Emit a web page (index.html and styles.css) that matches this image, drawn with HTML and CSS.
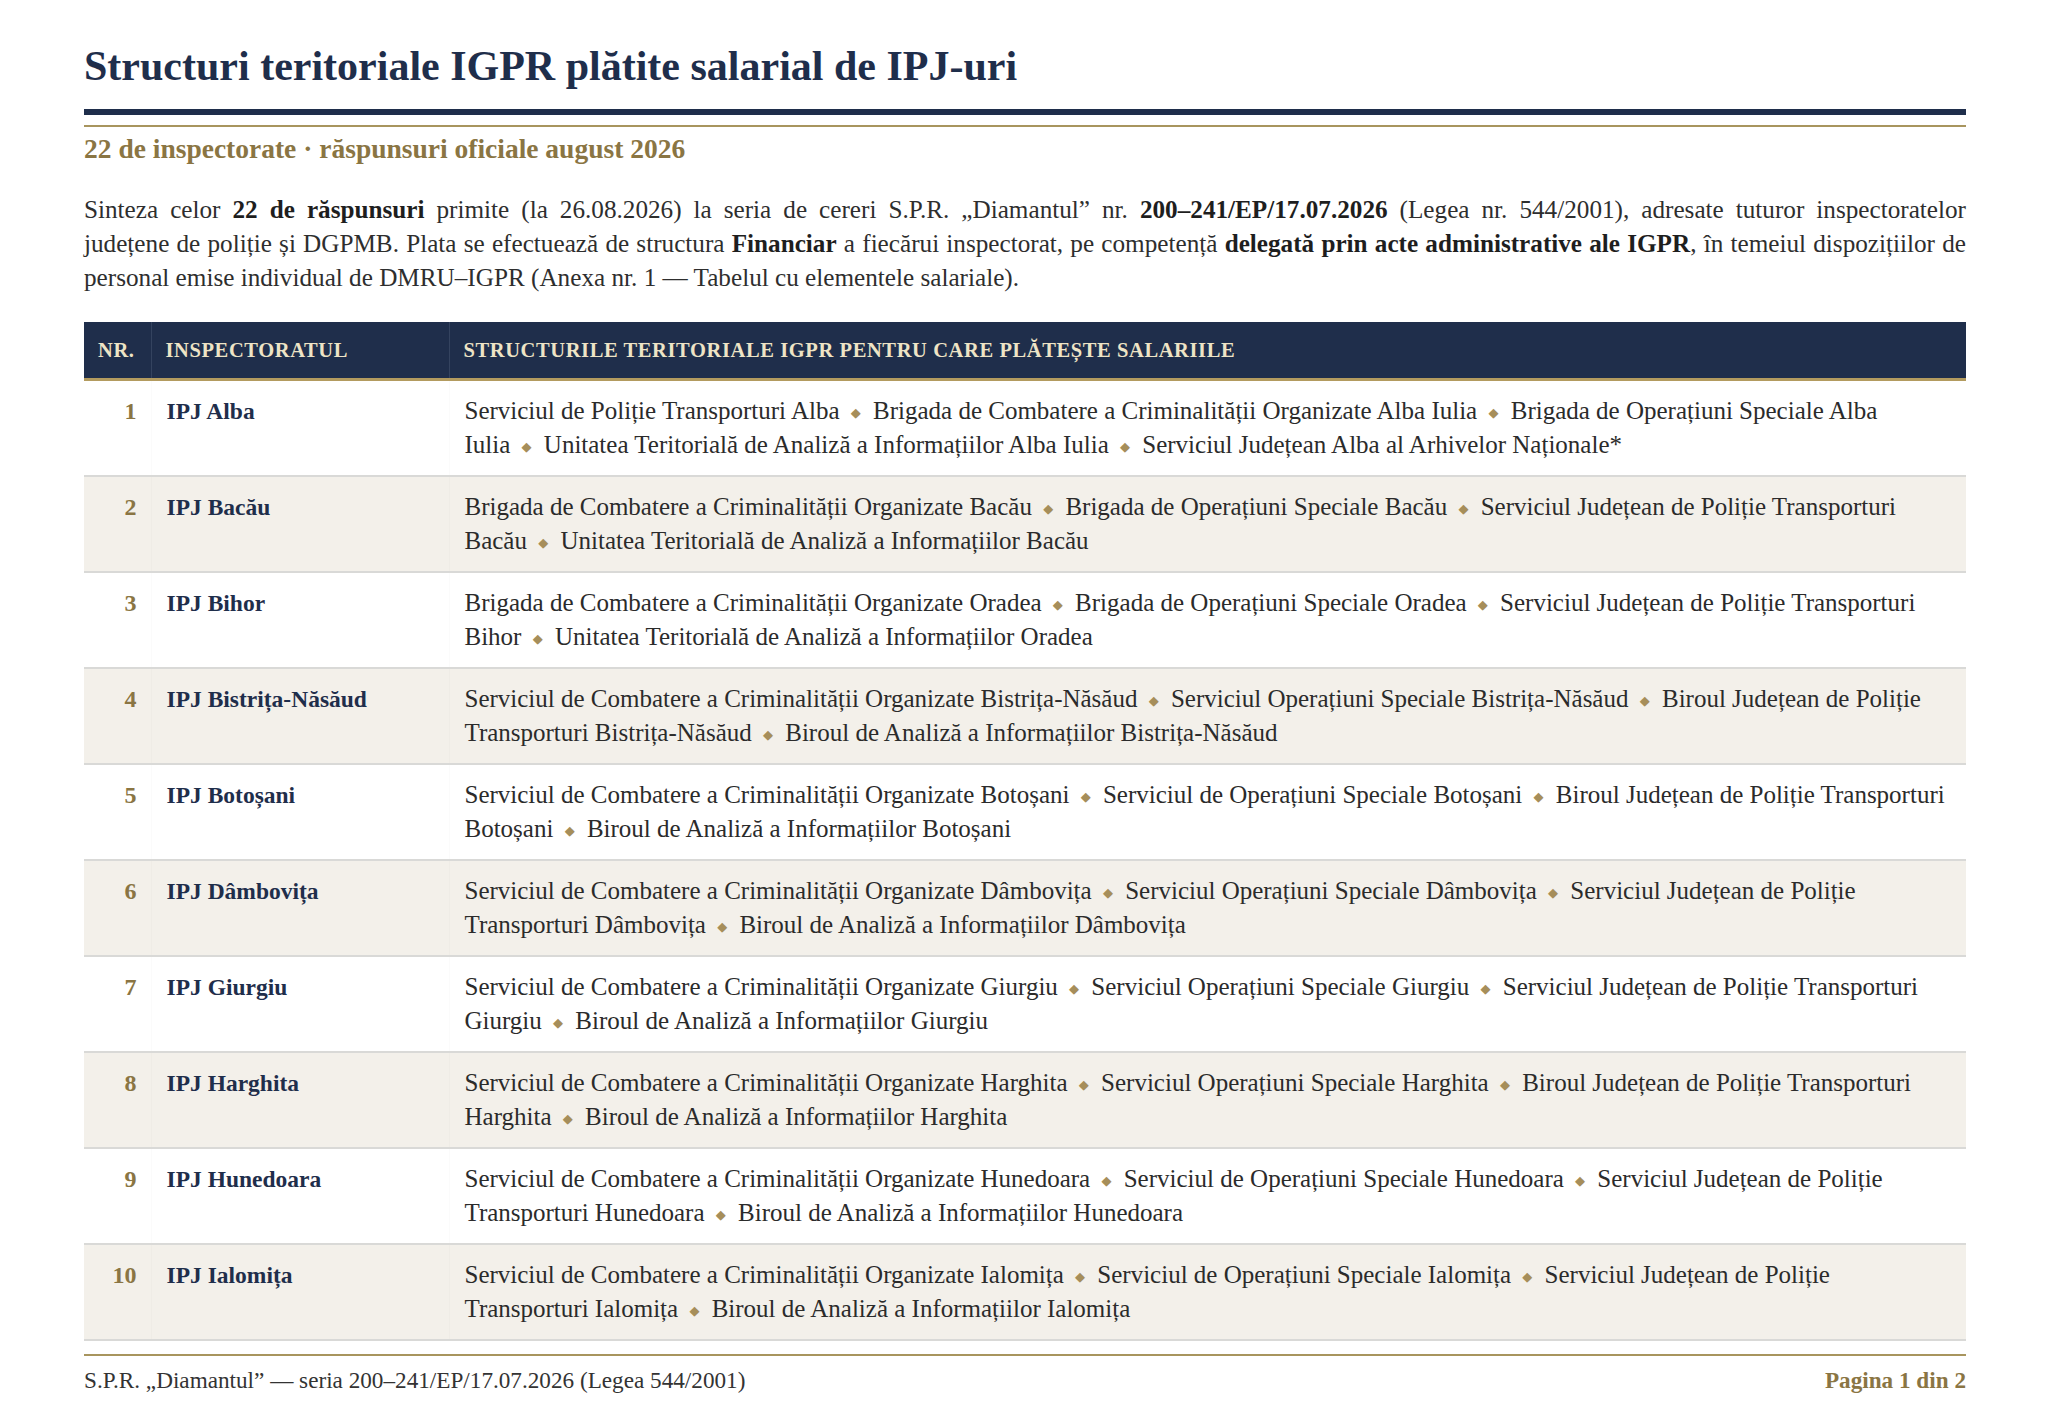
FILE: index.html
```html
<!DOCTYPE html>
<html lang="ro">
<head>
<meta charset="utf-8">
<title>Structuri teritoriale IGPR plătite salarial de IPJ-uri</title>
<link rel="stylesheet" href="styles.css">
</head>
<body>
<div class="page">
  <h1 class="title">Structuri teritoriale IGPR plătite salarial de IPJ-uri</h1>
  <div class="rule-navy"></div>
  <div class="rule-gold"></div>
  <p class="subtitle">22 de inspectorate · răspunsuri oficiale august 2026</p>
  <p class="intro"><span class="line">Sinteza celor <b>22 de răspunsuri</b> primite (la 26.08.2026) la seria de cereri S.P.R. „Diamantul” nr. <b>200–241/EP/17.07.2026</b> (Legea nr. 544/2001), adresate tuturor inspectoratelor</span> <span class="line">județene de poliție și DGPMB. Plata se efectuează de structura <b>Financiar</b> a fiecărui inspectorat, pe competență <b>delegată prin acte administrative ale IGPR</b>, în temeiul dispozițiilor de</span> personal emise individual de DMRU–IGPR (Anexa nr. 1 — Tabelul cu elementele salariale).</p>

  <table class="grid">
    <thead>
      <tr>
        <th class="c-nr">NR.</th>
        <th class="c-ipj">INSPECTORATUL</th>
        <th class="c-str">STRUCTURILE TERITORIALE IGPR PENTRU CARE PLĂTEȘTE SALARIILE</th>
      </tr>
    </thead>
    <tbody>
      <tr>
        <td class="c-nr">1</td>
        <td class="c-ipj">IPJ Alba</td>
        <td class="c-str">Serviciul de Poliție Transporturi Alba&nbsp;<span class="sep">◆</span> Brigada de Combatere a Criminalității Organizate Alba Iulia&nbsp;<span class="sep">◆</span> Brigada de Operațiuni Speciale Alba Iulia&nbsp;<span class="sep">◆</span> Unitatea Teritorială de Analiză a Informațiilor Alba Iulia&nbsp;<span class="sep">◆</span> Serviciul Județean Alba al Arhivelor Naționale*</td>
      </tr>
      <tr>
        <td class="c-nr">2</td>
        <td class="c-ipj">IPJ Bacău</td>
        <td class="c-str">Brigada de Combatere a Criminalității Organizate Bacău&nbsp;<span class="sep">◆</span> Brigada de Operațiuni Speciale Bacău&nbsp;<span class="sep">◆</span> Serviciul Județean de Poliție Transporturi Bacău&nbsp;<span class="sep">◆</span> Unitatea Teritorială de Analiză a Informațiilor Bacău</td>
      </tr>
      <tr>
        <td class="c-nr">3</td>
        <td class="c-ipj">IPJ Bihor</td>
        <td class="c-str">Brigada de Combatere a Criminalității Organizate Oradea&nbsp;<span class="sep">◆</span> Brigada de Operațiuni Speciale Oradea&nbsp;<span class="sep">◆</span> Serviciul Județean de Poliție Transporturi Bihor&nbsp;<span class="sep">◆</span> Unitatea Teritorială de Analiză a Informațiilor Oradea</td>
      </tr>
      <tr>
        <td class="c-nr">4</td>
        <td class="c-ipj">IPJ Bistrița-Năsăud</td>
        <td class="c-str">Serviciul de Combatere a Criminalității Organizate Bistrița&#8209;Năsăud&nbsp;<span class="sep">◆</span> Serviciul Operațiuni Speciale Bistrița&#8209;Năsăud&nbsp;<span class="sep">◆</span> Biroul Județean de Poliție Transporturi Bistrița&#8209;Năsăud&nbsp;<span class="sep">◆</span> Biroul de Analiză a Informațiilor Bistrița&#8209;Năsăud</td>
      </tr>
      <tr>
        <td class="c-nr">5</td>
        <td class="c-ipj">IPJ Botoșani</td>
        <td class="c-str">Serviciul de Combatere a Criminalității Organizate Botoșani&nbsp;<span class="sep">◆</span> Serviciul de Operațiuni Speciale Botoșani&nbsp;<span class="sep">◆</span> Biroul Județean de Poliție Transporturi Botoșani&nbsp;<span class="sep">◆</span> Biroul de Analiză a Informațiilor Botoșani</td>
      </tr>
      <tr>
        <td class="c-nr">6</td>
        <td class="c-ipj">IPJ Dâmbovița</td>
        <td class="c-str">Serviciul de Combatere a Criminalității Organizate Dâmbovița&nbsp;<span class="sep">◆</span> Serviciul Operațiuni Speciale Dâmbovița&nbsp;<span class="sep">◆</span> Serviciul Județean de Poliție Transporturi Dâmbovița&nbsp;<span class="sep">◆</span> Biroul de Analiză a Informațiilor Dâmbovița</td>
      </tr>
      <tr>
        <td class="c-nr">7</td>
        <td class="c-ipj">IPJ Giurgiu</td>
        <td class="c-str">Serviciul de Combatere a Criminalității Organizate Giurgiu&nbsp;<span class="sep">◆</span> Serviciul Operațiuni Speciale Giurgiu&nbsp;<span class="sep">◆</span> Serviciul Județean de Poliție Transporturi Giurgiu&nbsp;<span class="sep">◆</span> Biroul de Analiză a Informațiilor Giurgiu</td>
      </tr>
      <tr>
        <td class="c-nr">8</td>
        <td class="c-ipj">IPJ Harghita</td>
        <td class="c-str">Serviciul de Combatere a Criminalității Organizate Harghita&nbsp;<span class="sep">◆</span> Serviciul Operațiuni Speciale Harghita&nbsp;<span class="sep">◆</span> Biroul Județean de Poliție Transporturi Harghita&nbsp;<span class="sep">◆</span> Biroul de Analiză a Informațiilor Harghita</td>
      </tr>
      <tr>
        <td class="c-nr">9</td>
        <td class="c-ipj">IPJ Hunedoara</td>
        <td class="c-str">Serviciul de Combatere a Criminalității Organizate Hunedoara&nbsp;<span class="sep">◆</span> Serviciul de Operațiuni Speciale Hunedoara&nbsp;<span class="sep">◆</span> Serviciul Județean de Poliție Transporturi Hunedoara&nbsp;<span class="sep">◆</span> Biroul de Analiză a Informațiilor Hunedoara</td>
      </tr>
      <tr>
        <td class="c-nr">10</td>
        <td class="c-ipj">IPJ Ialomița</td>
        <td class="c-str">Serviciul de Combatere a Criminalității Organizate Ialomița&nbsp;<span class="sep">◆</span> Serviciul de Operațiuni Speciale Ialomița&nbsp;<span class="sep">◆</span> Serviciul Județean de Poliție Transporturi Ialomița&nbsp;<span class="sep">◆</span> Biroul de Analiză a Informațiilor Ialomița</td>
      </tr>
    </tbody>
  </table>

  <footer class="foot">
    <span class="foot-left">S.P.R. „Diamantul” — seria 200–241/EP/17.07.2026 (Legea 544/2001)</span>
    <span class="foot-right">Pagina 1 din 2</span>
  </footer>
</div>
</body>
</html>
```
FILE: styles.css
```css
html, body {
  margin: 0;
  padding: 0;
  background: #ffffff;
}

body {
  font-family: "Liberation Serif", "Times New Roman", serif;
  color: #2b2b2b;
}

.page {
  padding: 42px 82px 0 84px;
}

.title {
  margin: 0;
  font-size: 42px;
  line-height: 48px;
  font-weight: 700;
  color: #1f2e4b;
}

.rule-navy {
  margin-top: 19px;
  height: 6px;
  background: #1f2e4b;
}

.rule-gold {
  margin-top: 10px;
  height: 2px;
  background: #a8955e;
}

.subtitle {
  margin: 6px 0 0;
  font-size: 27.5px;
  line-height: 32px;
  font-weight: 700;
  color: #8a7543;
}

.intro {
  margin: 28px 0 0;
  font-size: 25.2px;
  line-height: 34px;
  text-align: justify;
  color: #2e2e2e;
}

.intro .line {
  display: block;
  text-align: justify;
  text-align-last: justify;
}

.intro b {
  color: #1e1e1e;
}

.grid {
  width: 100%;
  margin-top: 27px;
  border-collapse: collapse;
  table-layout: fixed;
}

.grid th {
  background: #1f2e4b;
  color: #eee4c6;
  font-size: 20.5px;
  font-weight: 700;
  letter-spacing: 0.6px;
  text-align: left;
  height: 56px;
  padding: 0 14px;
  border-bottom: 3px solid #b39b5f;
  border-right: 1px solid #34435f;
}

.grid th:last-child {
  border-right: none;
}

.grid .c-nr {
  width: 67px;
  box-sizing: border-box;
}

.grid .c-ipj {
  width: 298px;
  box-sizing: border-box;
}

.grid td {
  vertical-align: top;
  padding: 13px 15px 13px;
  border-bottom: 2px solid #d9d9d7;
  font-size: 25px;
  line-height: 34px;
}

.grid tbody tr:nth-child(even) td {
  background: #f3f0ea;
}

.grid td.c-nr {
  text-align: right;
  font-weight: 700;
  font-size: 24px;
  color: #8a7543;
  padding-right: 14px;
  border-right: 1px solid rgba(0, 0, 0, 0.015);
}

.grid td.c-ipj {
  font-weight: 700;
  font-size: 23.5px;
  color: #1f2e4b;
  border-right: 1px solid rgba(0, 0, 0, 0.015);
}

.grid td.c-str {
  color: #2b2b2b;
}

.sep {
  font-family: "DejaVu Sans", sans-serif;
  font-size: 13px;
  line-height: 1;
  color: #a68e5a;
  margin: 0 6px 0 5px;
  position: relative;
  top: -2px;
}

.foot {
  margin-top: 13px;
  border-top: 2px solid #a8955e;
  padding-top: 10px;
  display: flex;
  justify-content: space-between;
  align-items: baseline;
  font-size: 23.2px;
  line-height: 28px;
}

.foot-left {
  color: #333333;
}

.foot-right {
  color: #8a7543;
  font-weight: 700;
}
```
